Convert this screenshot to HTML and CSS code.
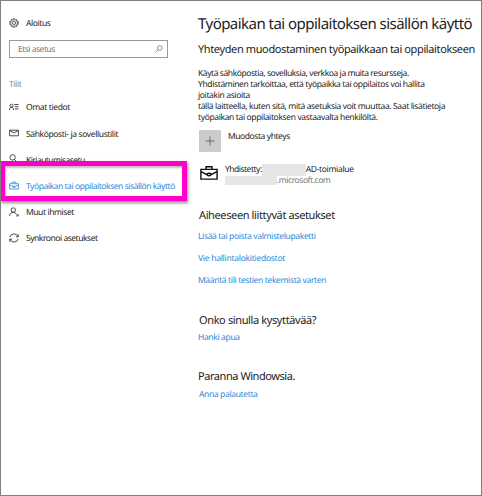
FILE: index.html
```html
<!DOCTYPE html>
<html lang="fi">
<head>
<meta charset="utf-8">
<title>Asetukset</title>
<link rel="stylesheet" href="styles.css">
</head>
<body>
<div class="window">
  <nav class="sidebar">
    <a class="item home">
      <svg class="icon" viewBox="0 0 10 10"><circle cx="5" cy="5" r="4.2" stroke-width=".9" stroke-dasharray="1.9 .74"/><circle cx="5" cy="5" r="3.4" stroke-width=".6"/><circle cx="5" cy="5" r="1.6" stroke-width=".7"/></svg>
      <span class="t-home">Aloitus</span>
    </a>
    <div class="search"><span>Etsi asetus</span>
      <svg class="glass" viewBox="0 0 8 8"><circle cx="4.8" cy="3" r="2.3"/><path d="M3.2 4.7 .6 7.4"/></svg>
    </div>
    <div class="group">Tilit</div>
    <a class="item">
      <svg class="icon" viewBox="0 0 10 10"><circle cx="2.5" cy="3.7" r="1.5"/><path d="M.4 8C.5 6.2 1.3 5.3 2.5 5.3S4.5 6.2 4.6 8M5.3 2.5H9.5M5.8 4.7H9.5M5.8 6.9H9.5"/></svg>
      <span class="t-own">Omat tiedot</span>
    </a>
    <a class="item">
      <svg class="icon" viewBox="0 0 10 10"><path d="M.6 2.2H9.4V7.8H.6ZM.8 2.5 5 5 9.2 2.5"/></svg>
      <span class="t-mail">Sähköposti- ja sovellustilit</span>
    </a>
    <a class="item">
      <svg class="icon" viewBox="0 0 10 10"><circle cx="3.6" cy="3.4" r="2.7"/><path d="M5.4 5.4 9 9V7.4M7.3 7.3 6.4 8.2"/></svg>
      <span class="t-login">Kirjautumisasetu</span>
    </a>
    <a class="item active">
      <svg class="icon" viewBox="0 0 10 10"><path d="M.6 2.7H9.4V8H.6ZM3.2 2.5V1H6.8V2.5M.8 4 3.8 5.4H6.2L9.2 4M3.9 5V6.2H6.1V5"/></svg>
      <span class="t-work">Työpaikan tai oppilaitoksen sisällön käyttö</span>
    </a>
    <a class="item">
      <svg class="icon" viewBox="0 0 10 10"><circle cx="4.3" cy="3" r="2.2"/><path d="M.6 9C.8 6.7 2.1 5.3 4.3 5.3 5.5 5.3 6.3 5.8 6.9 6.6L9 8.8M9.1 7.3V9H7.4"/></svg>
      <span class="t-people">Muut ihmiset</span>
    </a>
    <a class="item">
      <svg class="icon" viewBox="0 0 10 10"><path d="M.8 4.3A4.3 4.3 0 0 1 9 3.6M9.2 1.2V3.8H6.9M9.2 5.7A4.3 4.3 0 0 1 1 6.4M.8 8.8V6.2H3.1"/></svg>
      <span class="t-sync">Synkronoi asetukset</span>
    </a>
    <div class="highlight"></div>
  </nav>
  <main class="content">
    <h1>Työpaikan tai oppilaitoksen sisällön käyttö</h1>
    <h2 class="lead">Yhteyden muodostaminen työpaikkaan tai oppilaitokseen</h2>
    <p class="intro"><span class="p1">Käytä sähköpostia, sovelluksia, verkkoa ja muita resursseja.</span><br><span>Yhdistäminen tarkoittaa, että työpaikka tai oppilaitos voi hallita</span><br><span>joitakin asioita</span><br><span>tällä laitteella, kuten sitä, mitä asetuksia voit muuttaa. Saat lisätietoja</span><br><span>työpaikan tai oppilaitoksen vastaavalta henkilöltä.</span></p>
    <div class="connect">
      <span class="plus"><svg viewBox="0 0 22 22"><path d="M6.5 11H15.5M11 6.5V15.5"/></svg></span>
      <span class="t-connect">Muodosta yhteys</span>
    </div>
    <div class="account">
      <svg class="case" viewBox="0 0 18 14"><path d="M.9 3.4H17.1V13.1H.9ZM6 3.2V.8H12V3.2M1 5.6 6.8 8.6M17 5.6 11.2 8.6M6.8 7.8Q9 6.6 11.2 7.8Q11 9.8 9 9.8T6.8 7.8Z"/></svg>
      <div class="details">
        <div class="name"><span class="t-joined">Yhdistetty:</span><i class="mask"></i><span class="t-domain">AD-toimialue</span></div>
        <div class="host"><i class="mask wide"></i><span class="t-host">.microsoft.com</span></div>
      </div>
    </div>
    <h2 class="related">Aiheeseen liittyvät asetukset</h2>
    <a class="link l1">Lisää tai poista valmistelupaketti</a>
    <a class="link l2">Vie hallintalokitiedostot</a>
    <a class="link l3">Määritä tili testien tekemistä varten</a>
    <h2 class="question">Onko sinulla kysyttävää?</h2>
    <a class="link l4">Hanki apua</a>
    <h2 class="improve">Paranna Windowsia.</h2>
    <a class="link l5">Anna palautetta</a>
  </main>
</div>
</body>
</html>
```
FILE: styles.css
```css
* { box-sizing: border-box; }
body { margin: 0; background: #fff; font-family: "Noto Sans", "Open Sans", sans-serif; font-size: 8.5px; color: #222; text-rendering: geometricPrecision; }
.window { width: 482px; height: 496px; border: 1px solid #808080; display: flex; overflow: hidden; }
svg { fill: none; stroke: currentColor; stroke-width: .8; display: block; flex: none; }
span, h1, h2, a { white-space: nowrap; }

.sidebar { position: relative; width: 190px; flex: none; padding: 9px 0 0 8px; letter-spacing: -.42px; }
.item { display: flex; align-items: center; gap: 7px; height: 26.2px; }
.item span { padding-top: 1.5px; }
.icon { width: 10px; height: 10px; }
.home { height: 26px; }
.search { display: flex; align-items: center; justify-content: space-between; width: 159px; height: 18px; margin-top: 4px; padding: 0 4px 0 8px; border: 1px solid #999; color: #777; letter-spacing: -.5px; }
.glass { width: 8px; height: 8px; }
.group { margin-top: 18px; height: 18px; line-height: 18px; color: #888; letter-spacing: -.4px; }
.t-work { letter-spacing: -.45px; }
.t-login { letter-spacing: -.56px; }
.t-mail, .t-own { letter-spacing: -.38px; }
.t-sync { letter-spacing: -.47px; }
.active { color: #2b8ad8; }
.highlight { position: absolute; left: -1px; top: 160px; width: 187px; height: 40px; border: 5.5px solid #ff00c8; box-shadow: 1px 2px 3px rgba(0,0,0,.45), inset 1px 2px 2px rgba(0,0,0,.25); }

.content { flex: 1; min-width: 0; padding: 12px 0 0 7px; display: flex; flex-direction: column; align-items: flex-start; }
h1, h2, p { margin: 0; font-weight: 400; }
h1 { font-size: 15px; line-height: 22px; letter-spacing: -.53px; }
h2 { font-size: 11px; line-height: 18px; letter-spacing: -.38px; }
.lead { margin-top: 6px; font-size: 11px; letter-spacing: -.38px; }
.intro { margin-top: 9px; line-height: 11px; letter-spacing: -.37px; }
.p1 { letter-spacing: -.43px; }
.connect { display: flex; gap: 7px; margin: 7px 0 0 1px; line-height: 13px; letter-spacing: -.43px; }
.plus { width: 22px; height: 22px; background: #ccc; color: #555; }
.account { display: flex; gap: 7px; margin: 12px 0 0 2px; }
.case { width: 18px; height: 14px; margin-top: 2px; color: #111; stroke-width: 1.4; }
.details { line-height: 11px; }
.name, .host { display: flex; align-items: center; height: 11px; }
.t-joined { letter-spacing: -.5px; }
.t-domain { letter-spacing: -.33px; }
.host { color: #777; letter-spacing: -.45px; }
.mask { width: 44px; height: 12px; background: #e6e6e6; filter: blur(.6px); }
.mask.wide { width: 52px; height: 9px; }
.related { margin-top: 21px; margin-left: 1px; }
.link { color: #2b8ad8; line-height: 12px; letter-spacing: -.36px; }
.l1 { margin-top: 6px; }
.l2, .l3 { margin-top: 10px; }
.l2 { letter-spacing: -.27px; }
.question { margin-top: 25px; margin-left: 1px; }
.l4 { margin-top: 2px; }
.improve { margin-top: 24px; letter-spacing: -.44px; }
.l5 { margin-top: 3px; margin-left: 1px; }
```
